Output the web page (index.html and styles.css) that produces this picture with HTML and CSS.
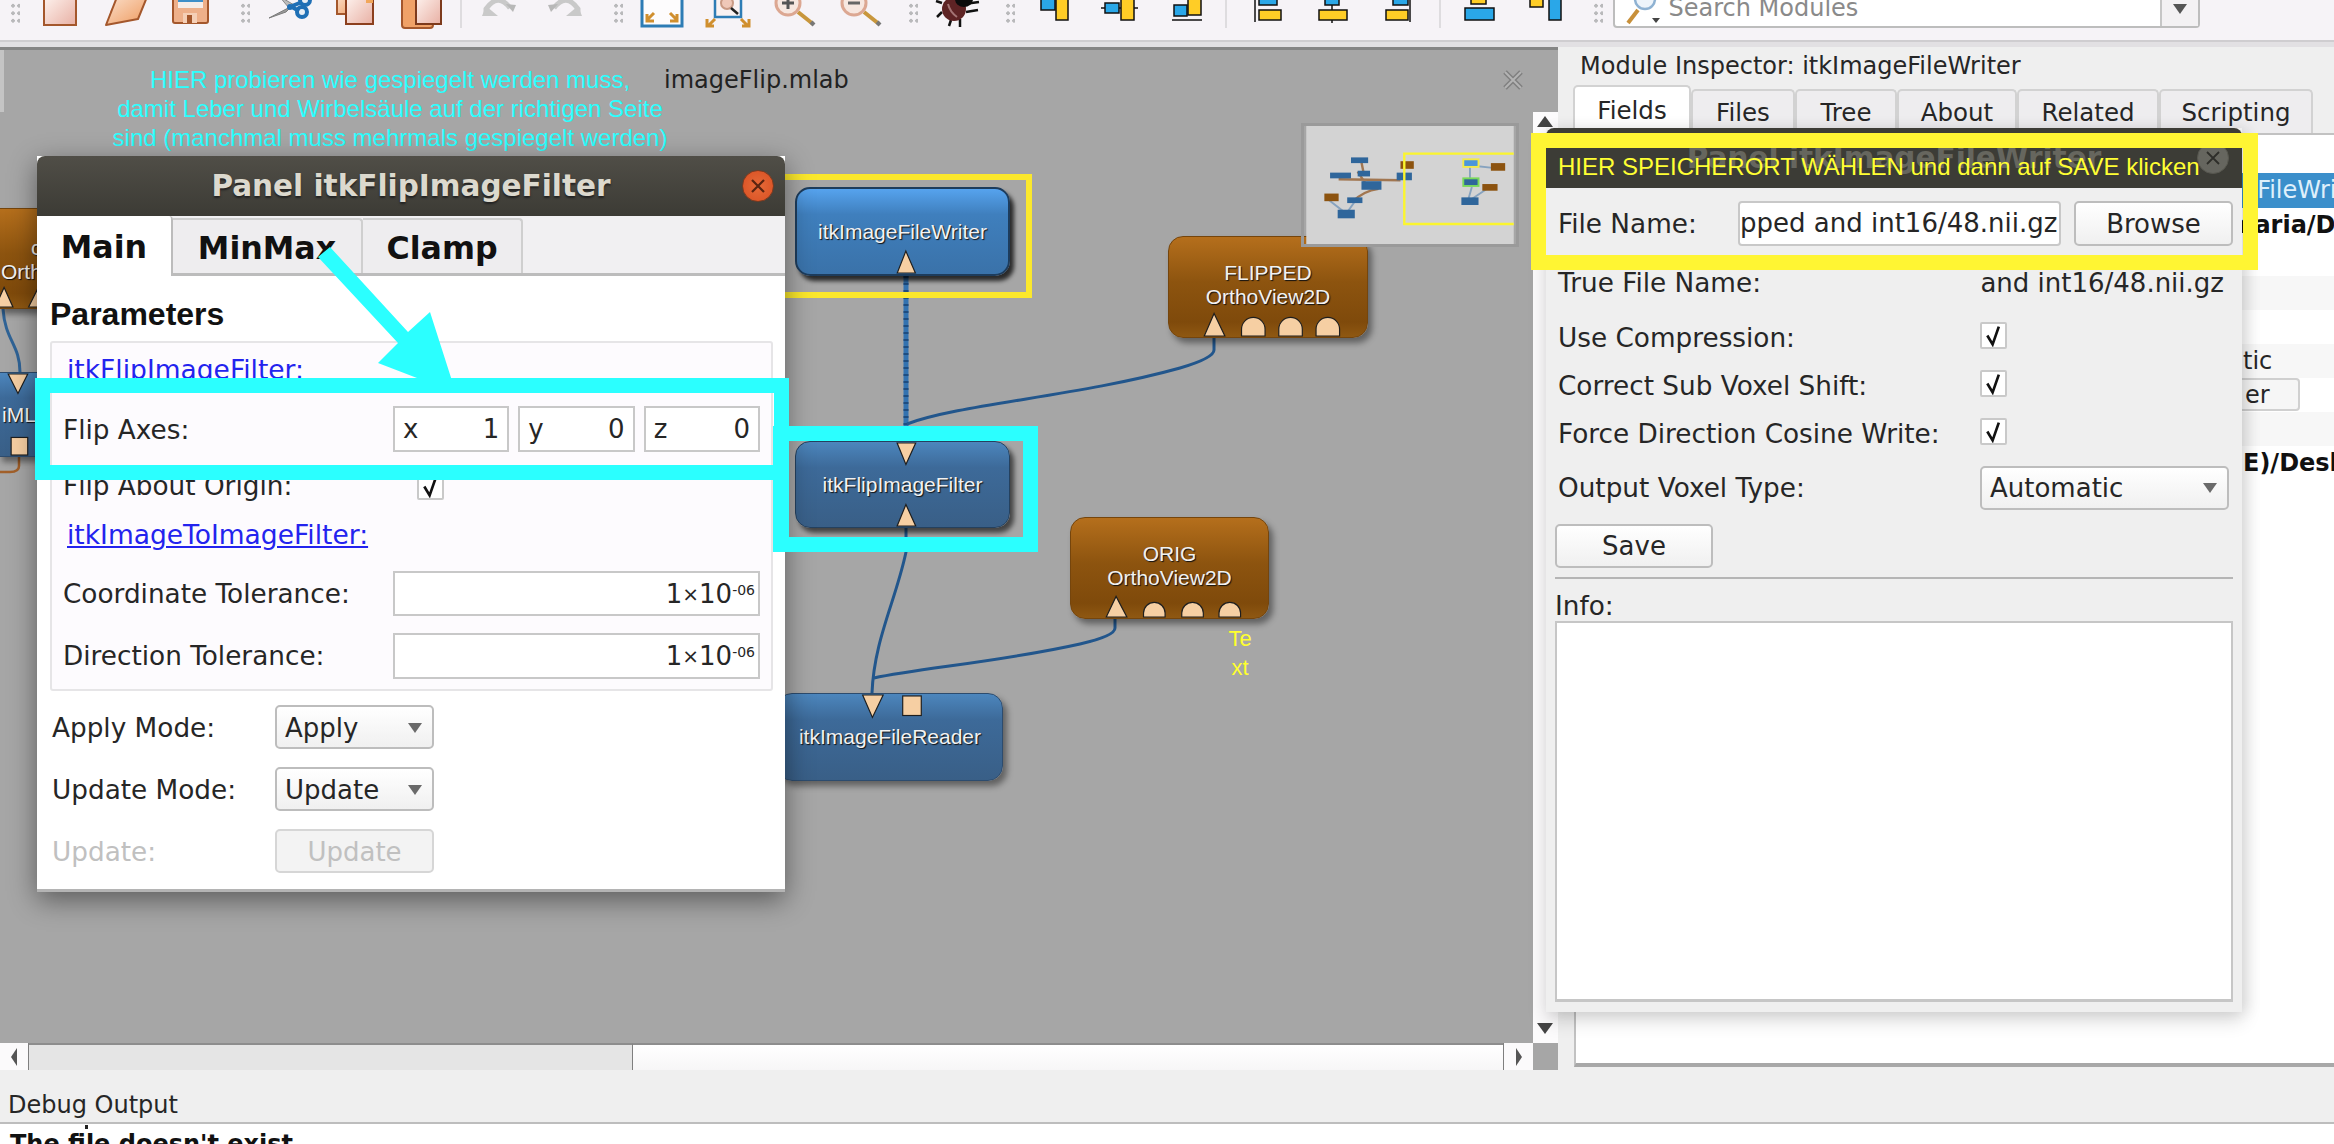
FILE: index.html
```html
<!DOCTYPE html>
<html lang="de">
<head>
<meta charset="utf-8">
<title>MeVisLab imageFlip.mlab</title>
<link rel="stylesheet" href="styles.css">
</head>
<body>
<svg class="defs" aria-hidden="true">
  <defs>
    <linearGradient id="doc" x1="0" y1="0" x2="1" y2="1"><stop offset="0" stop-color="#fff6f2"/><stop offset="1" stop-color="#e8b0a4"/></linearGradient>
    <linearGradient id="org" x1="0" y1="0" x2="1" y2="1"><stop offset="0" stop-color="#fbe0cc"/><stop offset="1" stop-color="#ee9a5e"/></linearGradient>
  </defs>
</svg>
<div class="app">
  <header class="toolbar">
    <span class="grip grip-first"></span>
    <svg class="ico" viewBox="0 0 66 43"><rect x="17" y="-6" width="32" height="31" fill="url(#doc)" stroke="#a4572c" stroke-width="2"/></svg>
    <svg class="ico" viewBox="0 0 66 43"><path d="M18 10 L14 25 L24 0 Z" fill="#c9713a"/><path d="M13 25 L24 -3 H54 L45 19 Z" fill="url(#org)" stroke="#a4572c" stroke-width="2" stroke-linejoin="round"/></svg>
    <svg class="ico" viewBox="0 0 66 43"><rect x="14" y="-5" width="35" height="28" rx="2" fill="#eeb08a" stroke="#a4572c" stroke-width="2"/><rect x="19" y="-3" width="25" height="11" fill="#f6ede8"/><rect x="19" y="0" width="25" height="2" fill="#3f8fc8"/><rect x="24" y="13" width="14" height="10" fill="#f5cfb6"/><rect x="28" y="15" width="5" height="8" fill="#a4572c"/></svg>
    <span class="grip"></span>
    <svg class="ico" viewBox="0 0 66 43"><path d="M36 6 L13 18 L30 12 Z" fill="#9a9a9a" stroke="#7c7c7c"/><path d="M33 8 L23 -4 L38 5 Z" fill="#bcbcbc" stroke="#888"/><circle cx="34" cy="7" r="3" fill="#1f6fb5"/><circle cx="46" cy="12" r="5" fill="#e8eef5" stroke="#1f6fb5" stroke-width="4"/><circle cx="49" cy="0" r="5" fill="#e8eef5" stroke="#1f6fb5" stroke-width="4"/><path d="M36 7 L43 11 M36 6 L46 2" stroke="#1f6fb5" stroke-width="4"/></svg>
    <svg class="ico" viewBox="0 0 66 43"><rect x="15" y="-6" width="24" height="20" fill="url(#org)" stroke="#a4572c" stroke-width="2"/><rect x="24" y="-6" width="27" height="30" fill="url(#doc)" stroke="#8c3f1e" stroke-width="2"/><path d="M44 -6 H51 V3 H44 Z" fill="#f1a65a"/></svg>
    <svg class="ico" viewBox="0 0 66 43"><rect x="14" y="-6" width="31" height="34" rx="3" fill="#f0a268" stroke="#a4572c" stroke-width="2"/><rect x="28" y="-6" width="25" height="30" fill="url(#doc)" stroke="#7d3a1c" stroke-width="2"/></svg>
    <span class="tsep tsep-a"></span>
    <svg class="ico" viewBox="0 0 66 43"><path d="M20 16 V9 Q32 -8 44 8" fill="none" stroke="#c9c9c9" stroke-width="5"/><path d="M16 16 H32 L20 6 Z" fill="#c9c9c9"/><path d="M40 4 L50 5 L47 12 Z" fill="#b8b8b8"/></svg>
    <svg class="ico" viewBox="0 0 66 43"><path d="M46 16 V9 Q34 -8 22 8" fill="none" stroke="#c9c9c9" stroke-width="5"/><path d="M50 16 H34 L46 6 Z" fill="#c9c9c9"/><path d="M26 4 L16 5 L19 12 Z" fill="#b8b8b8"/></svg>
    <span class="grip"></span>
    <svg class="ico" viewBox="0 0 66 43"><rect x="13" y="-6" width="40" height="32" fill="#fdfcfd" stroke="#2d7cb5" stroke-width="3"/><path d="M25 13 L19 19 M18 14 V21 H25" fill="none" stroke="#d08f2e" stroke-width="3"/><path d="M41 13 L47 19 M48 14 V21 H41" fill="none" stroke="#d08f2e" stroke-width="3"/></svg>
    <svg class="ico" viewBox="0 0 66 43"><rect x="20" y="-6" width="26" height="23" fill="#f9f2f2" stroke="#2d7cb5" stroke-width="2.5"/><circle cx="32" cy="3" r="6" fill="#efc8b8" stroke="#c99a84" stroke-width="2"/><path d="M36 8 L43 14" stroke="#222" stroke-width="2.5"/><path d="M20 19 L14 25 M12 19 V26 H19" fill="none" stroke="#d08f2e" stroke-width="3"/><path d="M46 19 L52 25 M54 19 V26 H47" fill="none" stroke="#d08f2e" stroke-width="3"/></svg>
    <svg class="ico" viewBox="0 0 66 43"><path d="M37 12 L52 24" stroke="#c8963c" stroke-width="4"/><path d="M50 22 L53 25" stroke="#777" stroke-width="4"/><circle cx="27" cy="3" r="12" fill="#f7e7e0" stroke="#dca792" stroke-width="3"/><path d="M21 3 H33 M27 -3 V9" stroke="#555" stroke-width="3"/></svg>
    <svg class="ico" viewBox="0 0 66 43"><path d="M37 12 L52 24" stroke="#c8963c" stroke-width="4"/><path d="M50 22 L53 25" stroke="#777" stroke-width="4"/><circle cx="27" cy="3" r="12" fill="#f7e7e0" stroke="#dca792" stroke-width="3"/><path d="M21 3 H33" stroke="#666" stroke-width="3"/></svg>
    <span class="grip"></span>
    <svg class="ico" viewBox="0 0 66 43"><path d="M18 3 L12 1 M18 12 L13 17 M27 20 L25 26 M36 19 L36 27 M42 12 L54 10 M40 4 L55 2" stroke="#111" stroke-width="2.5"/><ellipse cx="30" cy="9" rx="12" ry="12" fill="#5e2324"/><path d="M24 4 Q26 12 33 17" stroke="#a47474" stroke-width="2" fill="none"/><ellipse cx="40" cy="-1" rx="9" ry="8" fill="#0c0c0c"/></svg>
    <span class="grip"></span>
    <svg class="ico" viewBox="0 0 66 43"><rect x="20" y="-5" width="14" height="15" fill="#2aa7e8" stroke="#111" stroke-width="1.5"/><rect x="35" y="-5" width="12" height="25" fill="#ffcd26" stroke="#111" stroke-width="1.5"/></svg>
    <svg class="ico" viewBox="0 0 66 43"><path d="M14 8 H51" stroke="#111" stroke-width="1.5"/><rect x="18" y="3" width="14" height="10" fill="#2aa7e8" stroke="#111" stroke-width="1.5"/><rect x="34" y="-5" width="13" height="25" fill="#ffcd26" stroke="#111" stroke-width="1.5"/></svg>
    <svg class="ico" viewBox="0 0 66 43"><path d="M19 20 H49" stroke="#111" stroke-width="1.5"/><rect x="21" y="5" width="13" height="11" fill="#2aa7e8" stroke="#111" stroke-width="1.5"/><rect x="35" y="-5" width="13" height="20" fill="#ffcd26" stroke="#111" stroke-width="1.5"/></svg>
    <span class="tsep tsep-b"></span>
    <svg class="ico" viewBox="0 0 66 43"><path d="M21 -3 V22" stroke="#111" stroke-width="1.5"/><rect x="25" y="-5" width="18" height="10" fill="#2aa7e8" stroke="#111" stroke-width="1.5"/><rect x="25" y="10" width="22" height="10" fill="#ffcd26" stroke="#111" stroke-width="1.5"/></svg>
    <svg class="ico" viewBox="0 0 66 43"><path d="M32 -3 V23" stroke="#111" stroke-width="1.5"/><rect x="25" y="-5" width="14" height="10" fill="#2aa7e8" stroke="#111" stroke-width="1.5"/><rect x="19" y="10" width="28" height="10" fill="#ffcd26" stroke="#111" stroke-width="1.5"/></svg>
    <svg class="ico" viewBox="0 0 66 43"><path d="M44 -3 V22" stroke="#111" stroke-width="1.5"/><rect x="27" y="-5" width="15" height="10" fill="#2aa7e8" stroke="#111" stroke-width="1.5"/><rect x="20" y="10" width="22" height="10" fill="#ffcd26" stroke="#111" stroke-width="1.5"/></svg>
    <span class="tsep tsep-c"></span>
    <svg class="ico" viewBox="0 0 66 43"><rect x="25" y="-5" width="15" height="9" fill="#ffcd26" stroke="#111" stroke-width="1.5"/><rect x="19" y="8" width="29" height="12" fill="#2aa7e8" stroke="#111" stroke-width="1.5"/></svg>
    <svg class="ico" viewBox="0 0 66 43"><rect x="18" y="-5" width="13" height="12" fill="#ffcd26" stroke="#111" stroke-width="1.5"/><rect x="37" y="-5" width="12" height="25" fill="#2aa7e8" stroke="#111" stroke-width="1.5"/></svg>
    <span class="grip grip-last"></span>
    <div class="search">
      <svg class="search-ico" viewBox="0 0 42 34"><path d="M13 18 L3 31" stroke="#c8903a" stroke-width="4"/><circle cx="20" cy="7" r="10" fill="#eef4fa" stroke="#8fb2d2" stroke-width="2.5"/><path d="M27 26 H35 L31 31 Z" fill="#444"/></svg>
      <span class="search-text">Search Modules</span>
      <span class="search-drop"><i class="arrow"></i></span>
    </div>
  </header>

  <div class="main">
    <section class="canvas-area">
      <div class="canvas">
        <svg class="wires" viewBox="0 47 1558 996">
          <path d="M906 276 V430" stroke="#3272b0" stroke-width="5" fill="none"/>
          <path d="M906 276 V430" stroke="#1d4c80" stroke-width="5" stroke-dasharray="2 5" fill="none"/>
          <path d="M1214 338 V350 Q1214 358 1180 368 C1080 396 960 404 907 424" stroke="#22568c" stroke-width="3" fill="none"/>
          <path d="M906 528 V552 C896 600 874 640 872 693" stroke="#22568c" stroke-width="3" fill="none"/>
          <path d="M1115 619 V628 Q1115 636 1080 644 C1000 662 920 668 874 678" stroke="#22568c" stroke-width="3" fill="none"/>
          <path d="M3 309 C5 340 20 345 20 372" stroke="#2f6396" stroke-width="3" fill="none"/>
          <path d="M19 457 V466 Q19 472 10 472 H0" stroke="#a2602a" stroke-width="2.5" fill="none"/>
        </svg>

        <div class="node orange n-left-o">
          <div class="left-text"><span class="left-c">c</span><span>OrthoView2D</span></div>
          <svg class="pins" viewBox="0 0 120 101"><polygon class="pin" points="-4,100 5,80 14,100"/><polygon class="pin" points="30,100 40,80 50,100"/></svg>
        </div>
        <div class="node blue n-left-b">
          <span class="left-m">iMLI</span>
          <svg class="pins" viewBox="0 0 120 85"><polygon class="pin" points="9,1 29,1 19,21"/><rect class="pin" x="12" y="66" width="17" height="18"/></svg>
        </div>

        <div class="sel-yellow"></div>
        <div class="node blue-hi n-writer">itkImageFileWriter
          <svg class="pins" viewBox="0 0 215 89"><polygon class="pin" points="102,88 111,65 121,88"/></svg>
        </div>
        <div class="node blue n-flip">itkFlipImageFilter
          <svg class="pins" viewBox="0 0 215 87"><polygon class="pin" points="102,1 121,1 111,23"/><polygon class="pin" points="102,86 111,64 121,86"/></svg>
        </div>
        <div class="node blue n-reader">itkImageFileReader
          <svg class="pins" viewBox="0 0 226 88"><polygon class="pin" points="85,1 106,1 95,24"/><rect class="pin" x="126" y="2" width="19" height="20"/></svg>
        </div>
        <div class="node orange n-flipped"><span>FLIPPED</span><span>OrthoView2D</span>
          <svg class="pins" viewBox="0 0 200 102"><polygon class="pin" points="35,101 45,78 56,101"/><path class="pin" d="M73 101 V94 A12 12 0 0 1 97 94 V101 Z"/><path class="pin" d="M111 101 V94 A12 12 0 0 1 135 94 V101 Z"/><path class="pin" d="M149 101 V94 A12 12 0 0 1 173 94 V101 Z"/></svg>
        </div>
        <div class="node orange n-orig"><span>ORIG</span><span>OrthoView2D</span>
          <svg class="pins" viewBox="0 0 199 102"><polygon class="pin" points="35,101 45,80 56,101"/><path class="pin" d="M73 101 V97 A11 11 0 0 1 95 97 V101 Z"/><path class="pin" d="M112 101 V97 A11 11 0 0 1 134 97 V101 Z"/><path class="pin" d="M150 101 V97 A11 11 0 0 1 172 97 V101 Z"/></svg>
        </div>
        <div class="note-text">Te<br>xt</div>

        <div class="cyan-note">HIER probieren wie gespiegelt werden muss,<br>damit Leber und Wirbelsäule auf der richtigen Seite<br>sind (manchmal muss mehrmals gespiegelt werden)</div>
        <div class="doc-title">imageFlip.mlab</div>
        <svg class="doc-close" viewBox="0 0 22 20"><path d="M3 2 L19 18 M19 2 L3 18" stroke="#808080" stroke-width="5"/><path d="M3 2 L19 18 M19 2 L3 18" stroke="#b4b4b4" stroke-width="2"/></svg>
        <div class="edge-tick"></div>

        <svg class="minimap" viewBox="0 0 218 124">
          <rect width="218" height="124" fill="#d3d3d3"/>
          <path d="M34 56 L99 57 M54 48 L62 60 M58 38 L60 48 M48 80 Q60 68 76 66" stroke="#a17650" stroke-width="2.5" fill="none"/>
          <path d="M24 78 L42 92 L52 78 M172 42 V60 M174 64 L170 78 M178 42 L196 44 M172 78 L190 66" stroke="#87a3bf" stroke-width="2" fill="none"/>
          <g fill="#2f669b"><rect x="47" y="33" width="18" height="6"/><rect x="54" y="47" width="13" height="6"/><rect x="25" y="49" width="22" height="6"/><rect x="95" y="49" width="16" height="8"/><rect x="58" y="58" width="21" height="9"/><rect x="43" y="75" width="16" height="6"/><rect x="33" y="88" width="18" height="9"/><rect x="163" y="75" width="18" height="8"/></g>
          <g fill="#8c530f"><rect x="99" y="37" width="14" height="8"/><rect x="19" y="71" width="15" height="8"/><rect x="194" y="39" width="15" height="8"/><rect x="185" y="61" width="16" height="7"/></g>
          <rect x="165" y="35" width="16" height="8" fill="#4a96dc" stroke="#f2ea4a" stroke-width="2"/>
          <rect x="165" y="55" width="16" height="8" fill="#2f669b" stroke="#79d95a" stroke-width="2"/>
          <path d="M218 29 H103 V103 H218" fill="none" stroke="#fbf52e" stroke-width="2.5"/>
        </svg>

        <div class="vscroll"><i class="up"></i><i class="down"></i></div>
      </div>
      <div class="hscroll">
        <span class="h-btn"><i class="tri-l"></i></span>
        <span class="h-thumb"></span>
        <span class="h-trough"></span>
        <span class="h-btn h-btn-r"><i class="tri-r"></i></span>
      </div>
    </section>

    <aside class="dock">
      <div class="dock-title">Module Inspector: itkImageFileWriter</div>
      <div class="dock-tabs">
        <span class="dtab dtab-on w-fields">Fields</span>
        <span class="dtab w-files">Files</span>
        <span class="dtab w-tree">Tree</span>
        <span class="dtab w-about">About</span>
        <span class="dtab w-related">Related</span>
        <span class="dtab w-scripting">Scripting</span>
      </div>
      <div class="pane">
        <div class="prow pr-gap"></div>
        <div class="prow pr-blue">itkImageFileWriter</div>
        <div class="prow pr-b pr-in">/home/maria/Desktop</div>
        <div class="prow"></div>
        <div class="prow pr-st"></div>
        <div class="prow"></div>
        <div class="prow pr-st pr-tic">tic</div>
        <div class="prow pr-tic"><span class="pr-btn">er</span></div>
        <div class="prow pr-st"></div>
        <div class="prow pr-b pr-tic">E)/Desktop</div>
      </div>
    </aside>
  </div>

  <footer class="debug">
    <div class="debug-head">Debug Output</div>
    <div class="debug-log">The file doesn't exist</div>
  </footer>

  <!-- floating panel windows -->
  <div class="win flip-win">
    <div class="win-title">Panel itkFlipImageFilter<span class="close"><svg viewBox="0 0 12 12"><path d="M2 2 L10 10 M10 2 L2 10" stroke="#5a2410" stroke-width="1.5"/></svg></span></div>
    <div class="ptabs">
      <span class="ptab ptab-on">Main</span>
      <span class="ptab w-mm">MinMax</span>
      <span class="ptab w-cl">Clamp</span>
    </div>
    <div class="pbody">
      <h2 class="params">Parameters</h2>
      <div class="group">
        <div class="g-row g1"><a class="link" href="#">itkFlipImageFilter:</a></div>
        <div class="g-row g2"><span class="g-lab">Flip Axes:</span>
          <div class="axes">
            <span class="ax"><b>x</b><b>1</b></span><span class="ax"><b>y</b><b>0</b></span><span class="ax"><b>z</b><b>0</b></span>
          </div>
        </div>
        <div class="g-row g3"><span>Flip About Origin:</span><span class="cb cb-origin"><svg viewBox="0 0 26 26"><path d="M6 13 L12 23 L19 3" fill="none" stroke="#111" stroke-width="3"/></svg></span></div>
        <div class="g-row g4"><a class="link" href="#">itkImageToImageFilter:</a></div>
        <div class="g-row g5"><span>Coordinate Tolerance:</span><span class="num">1<span class="times">×</span>10<sup>-06</sup></span></div>
        <div class="g-row g6"><span>Direction Tolerance:</span><span class="num">1<span class="times">×</span>10<sup>-06</sup></span></div>
      </div>
      <div class="m-row"><span>Apply Mode:</span><span class="combo c-s">Apply<i class="arrow"></i></span></div>
      <div class="m-row"><span>Update Mode:</span><span class="combo c-s">Update<i class="arrow"></i></span></div>
      <div class="m-row m-off"><span>Update:</span><span class="btn c-s btn-off">Update</span></div>
    </div>
  </div>

  <div class="win write-win">
    <div class="win-title wt-faint">Panel itkImageFileWriter<span class="close close-gray"><svg viewBox="0 0 12 12"><path d="M2 2 L10 10 M10 2 L2 10" stroke="#2e2e2a" stroke-width="1.2"/></svg></span></div>
    <div class="wbody">
      <div class="w-file"><span class="w-lab1">File Name:</span><span class="w-input">pped and int16/48.nii.gz</span><span class="btn w-browse">Browse</span></div>
      <div class="w-row w-true"><span>True File Name:</span><span class="w-val">and int16/48.nii.gz</span></div>
      <div class="w-row w-first"><span>Use Compression:</span><span class="cb"><svg viewBox="0 0 26 26"><path d="M6 13 L12 23 L19 3" fill="none" stroke="#111" stroke-width="3"/></svg></span></div>
      <div class="w-row"><span>Correct Sub Voxel Shift:</span><span class="cb"><svg viewBox="0 0 26 26"><path d="M6 13 L12 23 L19 3" fill="none" stroke="#111" stroke-width="3"/></svg></span></div>
      <div class="w-row"><span>Force Direction Cosine Write:</span><span class="cb"><svg viewBox="0 0 26 26"><path d="M6 13 L12 23 L19 3" fill="none" stroke="#111" stroke-width="3"/></svg></span></div>
      <div class="w-row w-out"><span>Output Voxel Type:</span><span class="combo c-w">Automatic<i class="arrow"></i></span></div>
      <span class="btn w-save">Save</span>
      <div class="w-sep"></div>
      <div class="w-info">Info:</div>
      <div class="w-area"></div>
    </div>
  </div>

  <!-- annotations drawn over the screenshot -->
  <svg class="big-arrow" viewBox="0 0 150 140"><polygon points="8,10 20,0 98,85 120,65 144,140 107,131 68,116 88,96" fill="#2bffff"/></svg>
  <div class="box-cyan box-a"></div>
  <div class="box-cyan box-b"></div>
  <div class="box-yellow"></div>
  <div class="yellow-text">HIER SPEICHERORT WÄHLEN und dann auf SAVE klicken</div>
</div>
</body>
</html>
```

FILE: styles.css
```css
* { box-sizing: border-box; }
html, body { margin: 0; padding: 0; height: 100%; overflow: hidden; background: #efefef; }
body { font-family: "DejaVu Sans", sans-serif; font-size: 24px; color: #262626; }
.defs { position: absolute; width: 0; height: 0; }

.app { position: relative; width: 2334px; height: 1144px; overflow: hidden; display: flex; flex-direction: column; }

/* toolbar */
.toolbar { flex: 0 0 47px; height: 47px; display: flex; align-items: flex-start; overflow: hidden; background: #f6f3f7; border-bottom: 5px solid #e2e0e3; box-shadow: inset 0 -2px 0 #cfcdd0; position: relative; }
.ico { flex: 0 0 66px; width: 66px; height: 43px; }
.grip { flex: 0 0 31px; width: 31px; height: 24px; padding-left: 15px; position: relative; }
.grip::before { content: ""; display: block; margin-top: 2px; width: 10px; height: 22px; background-image: radial-gradient(circle, #b9b9bb 1.6px, transparent 1.8px); background-size: 6px 7.5px; }
.grip-first { flex-basis: 26.5px; width: 26.5px; padding-left: 10px; }
.grip-last { flex-basis: 35px; width: 35px; }
.tsep { height: 28px; }
.tsep-a { flex: 0 0 12px; width: 12px; box-shadow: inset -4px 0 0 #f6f3f7, inset -6px 0 0 #dedcdf; }
.tsep-b { flex: 0 0 15px; width: 15px; box-shadow: inset -7px 0 0 #f6f3f7, inset -9px 0 0 #dedcdf; }
.tsep-c { flex: 0 0 14px; width: 14px; box-shadow: inset -5px 0 0 #f6f3f7, inset -7px 0 0 #dedcdf; }

.search { flex: 0 0 587px; width: 587px; height: 38px; margin-top: -10px; display: flex; align-items: center; background: #fff; border: 2px solid #bdbdbd; border-radius: 4px; }
.search-ico { width: 42px; height: 34px; margin-left: 10px; flex: none; }
.search-text { flex: 1; margin-left: 2px; padding-bottom: 2px; color: #8a8a8a; line-height: 32px; }
.search-drop { flex: 0 0 38px; height: 100%; display: flex; align-items: center; justify-content: center; background: #f3f1f3; border-left: 2px solid #c6c6c6; }
.arrow { display: inline-block; width: 0; height: 0; border: 7px solid transparent; border-top: 10px solid #555; border-bottom: 0; }

/* main */
.main { flex: 0 0 1023px; height: 1023px; display: flex; }
.canvas-area { flex: 0 0 1558px; width: 1558px; display: flex; flex-direction: column; background: #a6a6a6; }
.canvas { flex: 1; position: relative; background: #a6a6a6; border-top: 3px solid #858585; }
.wires { position: absolute; left: 0; top: -3px; width: 1558px; height: 996px; }

.node { position: absolute; display: flex; flex-direction: column; align-items: center; justify-content: center; border-radius: 15px; font-family: "Liberation Sans", sans-serif; font-size: 21px; line-height: 24px; color: #f2f2f2; text-shadow: 1px 1px 1px #111; box-shadow: 4px 5px 6px rgba(0,0,0,.42); }
.blue { background: linear-gradient(#4c86bd, #3d6a99 30%, #395f87); border: 1px solid #2d4c6e; }
.blue-hi { background: linear-gradient(#56a3ee, #3f7fbd 30%, #3a72a9); border: 2px solid #1d3c5c; box-shadow: 4px 5px 4px rgba(0,0,0,.75); }
.orange { background: linear-gradient(#b56f1c, #8d540f 45%, #7f4a0b 85%, #8f5812); border: 1px solid #75450c; }
.pins { position: absolute; left: 0; top: 0; width: 100%; height: 100%; overflow: visible; }
.pin { fill: #f6cfa3; stroke: #1e1e1e; stroke-width: 1.2; }

.n-writer { left: 795px; top: 137px; width: 215px; height: 89px; }
.n-flip { left: 795px; top: 391px; width: 215px; height: 87px; box-shadow: 4px 5px 5px rgba(0,0,0,.6); border-color: #24415f; }
.n-reader { left: 777px; top: 643px; width: 226px; height: 88px; }
.n-flipped { left: 1168px; top: 186px; width: 200px; height: 102px; padding-bottom: 4px; }
.n-orig { left: 1070px; top: 467px; width: 199px; height: 102px; padding-bottom: 4px; }
.n-left-o { left: -2px; top: 158px; width: 120px; height: 101px; align-items: flex-start; border-radius: 0; }
.left-text { display: flex; flex-direction: column; padding-left: 2px; margin-top: 2px; }
.left-c { padding-left: 30px; }
.n-left-b { left: -2px; top: 322px; width: 120px; height: 85px; align-items: flex-start; border-radius: 0; }
.left-m { padding-left: 3px; }

.sel-yellow { position: absolute; left: 770px; top: 124px; width: 262px; height: 124px; border: 6px solid #fbe82c; }
.note-text { position: absolute; left: 1222px; top: 574px; width: 36px; text-align: center; font: 22px/29px "Liberation Sans", sans-serif; color: #ffff2e; }
.cyan-note { position: absolute; left: 90px; top: 15px; width: 600px; text-align: center; font: 24px/29px "Liberation Sans", sans-serif; color: #2bffff; }
.doc-title { position: absolute; left: 664px; top: 15px; line-height: 30px; color: #222; }
.doc-close { position: absolute; left: 1502px; top: 20px; width: 22px; height: 20px; }
.edge-tick { position: absolute; left: 0; top: 0; width: 4px; height: 62px; background: #c4c4c4; }
.minimap { position: absolute; left: 1301px; top: 73px; width: 218px; height: 124px; border: 3px solid #9a9a9a; }

.vscroll { position: absolute; right: 0; top: 62px; bottom: 0; width: 25px; background: #fcfbfc; }
.up, .down { position: absolute; left: 4px; width: 0; height: 0; border: 8px solid transparent; }
.up { top: 4px; border-bottom: 11px solid #444; border-top: 0; }
.down { bottom: 9px; border-top: 11px solid #444; border-bottom: 0; }

.hscroll { flex: 0 0 27px; width: 1533px; display: flex; background: #fbfafb; box-shadow: inset 0 2px 0 #8d8d8d; }
.h-btn { flex: 0 0 29px; display: flex; align-items: center; justify-content: center; border-right: 1px solid #7f7f7f; background: #fbfafb; }
.h-btn-r { flex-basis: 30px; border-right: 0; border-left: 1px solid #7f7f7f; }
.tri-l, .tri-r { width: 0; height: 0; border: 9px solid transparent; }
.tri-l { border-right: 6px solid #555; border-left: 0; }
.tri-r { border-left: 6px solid #555; border-right: 0; }
.h-thumb { flex: 0 0 604px; background: #e5e5e5; border-right: 1px solid #7f7f7f; border-top: 2px solid #8d8d8d; }
.h-trough { flex: 1; background: linear-gradient(#fff, #f7f6f7); border-top: 2px solid #8d8d8d; }

/* dock */
.dock { flex: 1; min-width: 0; background: #efefef; padding-left: 16px; display: flex; flex-direction: column; overflow: hidden; }
.dock-title { height: 38px; margin-left: 6px; line-height: 38px; }
.dock-tabs { height: 48px; display: flex; align-items: flex-end; margin-left: -1px; font-size: 24.5px; }
.dtab { height: 44px; display: flex; align-items: center; justify-content: center; background: #eeedef; border: 2px solid #d2d2d2; border-bottom: 0; border-radius: 5px 5px 0 0; }
.dtab-on { height: 48px; background: #fff; }
.w-fields { width: 118px; } .w-files { width: 104px; } .w-tree { width: 102px; } .w-about { width: 120px; } .w-related { width: 142px; } .w-scripting { width: 154px; }
.pane { flex: 0 0 934px; background: #fff; border-left: 2px solid #c2c2c2; border-top: 2px solid #c2c2c2; border-bottom: 4px solid #a8a8a8; overflow: hidden; }
.prow { height: 34px; line-height: 34px; white-space: nowrap; overflow: hidden; }
.pr-gap { height: 38px; }
.pr-blue { height: 35px; padding-left: 576px; background: #3b8fcb; color: #dff0fb; }
.pr-b { font-weight: 700; color: #111; }
.pr-in { padding-left: 561px; }
.pr-st { background: #f7f7f7; }
.pr-tic { padding-left: 667px; }
.pr-btn { display: inline-block; height: 33px; width: 80px; margin-left: -23px; padding-left: 23px; line-height: 31px; background: #f6f6f6; border: 2px solid #d0d0d0; border-radius: 4px; }

/* debug */
.debug { flex: 1; background: #fff; overflow: hidden; position: relative; }
.debug-head { height: 54px; padding: 19px 0 0 8px; line-height: 32px; background: #efefef; border-bottom: 2px solid #bdbdbd; }
.debug-log { padding: 4px 0 0 10px; font-weight: 700; color: #111; line-height: 32px; }
.debug::after { content: ""; position: absolute; left: 85px; top: 55px; width: 3px; height: 4px; background: #222; }

/* windows */
.win { position: absolute; display: flex; flex-direction: column; font-size: 26.3px; box-shadow: 0 8px 26px rgba(0,0,0,.45); }
.flip-win { left: 37px; top: 156px; width: 748px; height: 736px; background: #fff; border-bottom: 3px solid #b4b4b4; }
.write-win { left: 1546px; top: 128px; width: 696px; height: 884px; background: #efefef; box-shadow: 0 8px 18px rgba(0,0,0,.16), 6px 0 14px rgba(0,0,0,.08); }
.win-title { flex: 0 0 60px; position: relative; display: flex; align-items: center; justify-content: center; background: linear-gradient(#504e47, #3c3b35); border-radius: 8px 8px 0 0; font-weight: 700; font-size: 29.5px; color: #dcd9ce; text-shadow: 0 2px 2px #222; }
.close { position: absolute; right: 11px; top: 14px; width: 32px; height: 32px; border-radius: 50%; background: radial-gradient(#e66a38, #d94f22); border: 1px solid #7a3a20; display: flex; align-items: center; justify-content: center; }
.close svg { width: 18px; height: 18px; }
.wt-faint { background: #3c3c36; color: #66665e; text-shadow: none; }
.close-gray { right: 13px; top: 14px; background: #66665f; border-color: #57574f; }

.ptabs { flex: 0 0 60px; display: flex; align-items: flex-end; background: #f1f0f2; border-bottom: 3px solid #bcbcbc; font-weight: 700; font-size: 31.7px; color: #111; }
.ptab { height: 55px; padding-top: 2px; display: flex; align-items: center; justify-content: center; background: #eeedef; border: 2px solid #cfcfcf; border-bottom: 0; border-left: 0; border-radius: 0 4px 0 0; }
.ptab-on { width: 136px; height: 60px; margin-bottom: -3px; background: #fff; border: 0; border-right: 2px solid #bcbcbc; }
.w-mm { width: 190px; } .w-cl { width: 160px; }
.pbody { flex: 1; display: flex; flex-direction: column; padding: 0 12px 0 13px; }
.params { margin: 21px 0 0; height: 44px; font: 700 32px/34px "Liberation Sans", sans-serif; color: #111; }
.group { height: 350px; background: #fdfbfe; border: 2px solid #e6e5e7; border-radius: 3px; padding: 0 11px; display: flex; flex-direction: column; }
.g-row { display: grid; grid-template-columns: 330px 1fr; align-items: center; height: 46px; flex: none; }
.g-lab { padding-top: 2px; }
.g1 { margin-top: 4px; display: block; line-height: 46px; padding-left: 4px; }
.g2 { margin-top: 13px; }
.g3 { margin-top: 11px; }
.g4 { margin-top: 3px; display: block; line-height: 46px; padding-left: 4px; }
.g5 { margin-top: 13px; height: 45px; }
.g6 { margin-top: 17px; }
.link { font-size: 26.5px; color: #2323ee; text-decoration: underline; }
.axes { display: flex; gap: 9px; height: 46px; font-size: 26px; }
.ax { flex: 1; display: flex; justify-content: space-between; align-items: center; padding: 0 8px; background: #fff; border: 2px solid #c8c8c8; }
.ax b { font-weight: 400; }
.num { height: 100%; display: flex; align-items: center; justify-content: flex-end; padding-right: 3px; font-size: 26px; background: #fff; border: 2px solid #c8c8c8; }
.times { font-size: 20px; }
.num sup { font-size: 14px; align-self: flex-start; margin-top: 9px; }
.cb { display: block; width: 27px; height: 27px; background: #fff; border: 2px solid #c9c9c9; border-radius: 2px; }
.cb svg { display: block; width: 23px; height: 23px; }
.cb-origin { margin-left: 24px; }
.combo { display: flex; align-items: center; justify-content: space-between; font-size: 26px; background: linear-gradient(#fff, #f0f0f0); border: 2px solid #bdbdbd; border-radius: 5px; padding: 0 10px 0 8px; }
.combo .arrow { border-top-color: #6a6a6a; }
.btn { display: flex; align-items: center; justify-content: center; font-size: 26px; background: linear-gradient(#fff, #f0f0f0); border: 2px solid #bdbdbd; border-radius: 5px; }
.btn-off { background: #f3f3f3; color: #c0c0c0; border-color: #d6d6d6; }
.m-row { display: grid; grid-template-columns: 223px 159px; align-items: center; height: 44px; margin-top: 18px; padding-left: 2px; flex: none; }
.m-row > span { padding-top: 2px; }
.group + .m-row { margin-top: 14px; }
.c-s { height: 44px; }
.m-off > span:first-child { color: #c0c0c0; }

.wbody { flex: 1; display: flex; flex-direction: column; padding: 13px 9px 0; }
.w-file { height: 45px; display: flex; align-items: center; flex: none; }
.w-lab1 { flex: 0 0 183px; padding-left: 3px; }
.w-input { flex: 0 0 323px; height: 45px; line-height: 41px; font-size: 26px; text-align: right; padding-right: 3px; background: #fff; border: 2px solid #c8c8c8; border-radius: 4px; overflow: hidden; white-space: nowrap; }
.w-browse { flex: 0 0 159px; height: 45px; margin-left: 13px; }
.w-row { display: grid; grid-template-columns: 422px 1fr; align-items: center; height: 48px; padding-left: 3px; flex: none; }
.w-row .cb { margin-top: -6px; }
.w-true { height: 44px; margin-top: 15px; }
.w-val { padding-right: 9px; font-size: 26px; white-space: nowrap; justify-self: end; }
.w-first { margin-top: 9px; }
.w-out { height: 44px; margin-top: 8px; }
.c-w { height: 44px; width: 249px; }
.w-save { flex: none; width: 158px; height: 44px; margin-top: 14px; }
.w-sep { flex: none; height: 2px; margin-top: 9px; background: #b5b5b5; }
.w-info { flex: none; height: 42px; padding-top: 11px; line-height: 32px; }
.w-area { flex: 0 0 381px; background: #fff; border: 2px solid #c6c6c6; border-bottom-width: 3px; }

/* annotations */
.big-arrow { position: absolute; left: 310px; top: 247px; width: 150px; height: 140px; }
.box-cyan { position: absolute; border: 15px solid #2bffff; }
.box-a { left: 35px; top: 378px; width: 754px; height: 102px; }
.box-b { left: 773px; top: 426px; width: 265px; height: 126px; border-left-width: 16px; }
.box-yellow { position: absolute; left: 1531px; top: 133px; width: 727px; height: 137px; border: 15px solid #fff533; }
.yellow-text { position: absolute; left: 1558px; top: 153px; font: 24px/28px "Liberation Sans", sans-serif; color: #ffff33; white-space: nowrap; }
```
